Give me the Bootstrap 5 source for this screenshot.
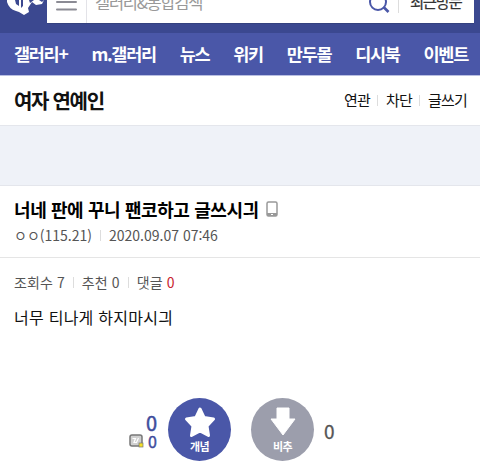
<!DOCTYPE html>
<html lang="ko">
<head>
    <meta charset="utf-8">
    <meta name="viewport" content="width=device-width, initial-scale=1">
    <title>여자 연예인</title>
    <link href="https://cdn.jsdelivr.net/npm/bootstrap@5.3.0/dist/css/bootstrap.min.css" rel="stylesheet">
    <style>
        body { font-family: "Noto Sans CJK KR", sans-serif; color: #111; line-height: 1.5; overflow: hidden; }
        a { color: inherit; text-decoration: none; }
        .top-bar { height: 33px; background: #3b4890; padding-right: 6px; }
        .logo-box { width: 47px; height: 33px; }
        .search-box { height: 24px; background: #fff; border-bottom: 1px solid #34417f; }
        .menu-btn { width: 40px; height: 23px; border-right: 1px solid #e3e3e8; }
        .search-text { font-size: 16.5px; line-height: 24px; letter-spacing: -1.3px; color: #999; padding-left: 8px; margin-top: -10px; }
        .recent { font-size: 15.5px; line-height: 24px; letter-spacing: -1.4px; color: #333; width: 75px; padding-left: 11px; margin-top: -11px; -webkit-text-stroke: .2px; }
        .recent-wrap { border-left: 1px solid #ddd; height: 13px; }
        .gnb { height: 43px; background: #4a57a8; border-bottom: 1px solid #b9bfe2; color: #fff; font-size: 17.5px; letter-spacing: -1.3px; padding: 0 12px 0 14px; }
        .gall-head { height: 49px; padding: 0 13px 0 14px; }
        .gall-name { font-size: 20px; letter-spacing: -1.3px; }
        .gall-links { font-size: 15px; letter-spacing: -.8px; gap: 7.5px; }
        .bar { width: 1px; height: 11px; background: #ddd; }
        .ad-area { height: 61px; background: #eff2f8; border: solid #e4e6ec; border-width: 1px 0; }
        .post-head { height: 72px; padding: 10px 14px 0; border-bottom: 1px solid #e5e5e5; }
        .post-title { font-size: 18px; line-height: 27px; letter-spacing: -.4px; color: #000; }
        .phone-icon { margin-left: 7px; margin-top: -1px; }
        .meta { font-size: 14px; line-height: 21px; color: #555; }
        .meta-date { margin-top: 2px; }
        .post-stats { padding: 14px 14px 0; }
        .stat-list { letter-spacing: .1px; }
        .comment-count { color: #c8232f; }
        .post-body { font-size: 16px; line-height: 24px; letter-spacing: .25px; margin: 12px 0 0; }
        .vote-row { height: 64px; margin-top: 68px; }
        .vote-left { width: 157px; margin-right: 11px; }
        .vote-btn { width: 63px; height: 63px; border-radius: 50%; color: #fff; font-size: 11px; line-height: 16px; letter-spacing: -.5px; padding-top: 9px; }
        .up { background: #4a57a8; }
        .down { background: #9c9eac; margin-left: 20px; margin-right: 10px; }
        .count { font-size: 20px; line-height: 20px; color: #3f4c9c; -webkit-text-stroke: .5px; }
        .count-sub { font-size: 16px; line-height: 16px; color: #3f4c9c; -webkit-text-stroke: .4px; }
        .count-down { font-size: 19px; color: #555; -webkit-text-stroke: .3px; margin-top: 4px; }
    </style>
    <script src="https://cdn.jsdelivr.net/npm/bootstrap@5.3.0/dist/js/bootstrap.bundle.min.js"></script>
</head>
<body>
    <!-- Search -->
    <header class="top-bar d-flex align-items-start">
        <div class="logo-box">
            <svg class="d-block" width="47" height="17" viewBox="0 0 47 17" fill="#fff">
                <path d="M7 0H15L16 4L19 6V0H29L30 3L34 0H39L42 2L44 0L42 4L36 5L32 2L28 8L29 12L24 15L19 12L16 11Q9 9 7 2Z"/>
                <path d="M21 0V8L23 6V0Z" fill="#3b4890"/>
            </svg>
        </div>
        <div class="search-box flex-grow-1 d-flex align-items-start">
            <div class="menu-btn">
                <svg class="d-block" width="40" height="14" stroke="#8b8b94" stroke-width="2" stroke-linecap="round"><path d="M10 2H29M10 9.500H29"/></svg>
            </div>
            <div class="search-text flex-grow-1">갤러리&amp;통합검색</div>
            <svg class="me-2" width="22" height="14" viewBox="0 0 22 14" fill="none" stroke="#4a57a8" stroke-width="2"><circle cx="10" cy="2" r="8"/><path d="M15.500 7L20.500 12" stroke-width="2.600"/></svg>
            <div class="recent-wrap"><div class="recent">최근방문</div></div>
        </div>
    </header>

    <!-- Main menu -->
    <nav class="gnb d-flex align-items-center justify-content-between fw-bold text-nowrap">
        <a href="#">갤러리+</a>
        <a href="#">m.갤러리</a>
        <a href="#">뉴스</a>
        <a href="#">위키</a>
        <a href="#">만두몰</a>
        <a href="#">디시북</a>
        <a href="#">이벤트</a>
    </nav>

    <section class="gall-head d-flex align-items-center justify-content-between">
        <h1 class="gall-name fw-bold mb-0">여자 연예인</h1>
        <div class="gall-links d-flex align-items-center">
            <a href="#">연관</a><span class="bar"></span>
            <a href="#">차단</a><span class="bar"></span>
            <a href="#">글쓰기</a>
        </div>
    </section>

    <div class="ad-area"></div>

    <!-- Post -->
    <article>
        <div class="post-head">
            <div class="d-flex align-items-center">
                <h2 class="post-title fw-bold mb-0">너네 판에 꾸니 팬코하고 글쓰시긔</h2>
                <svg class="phone-icon" width="12" height="16" viewBox="0 0 12 16"><rect x="1" y="1" width="10" height="14" rx="1.500" fill="#fff" stroke="#999" stroke-width="1.500"/><path d="M1 12H11V15H1Z" fill="#999"/><path d="M5 13.500H7" stroke="#fff"/></svg>
            </div>
            <div class="meta meta-date d-flex align-items-center gap-2">
                <span>ㅇㅇ(115.21)</span><span class="bar"></span><span>2020.09.07 07:46</span>
            </div>
        </div>
        <div class="post-stats">
            <div class="meta stat-list d-flex align-items-center gap-2">
                <span>조회수 7</span><span class="bar"></span><span>추천 0</span><span class="bar"></span>
                <span>댓글 <span class="comment-count">0</span></span>
            </div>
            <p class="post-body">너무 티나게 하지마시긔</p>
        </div>

        <!-- Votes -->
        <div class="vote-row d-flex align-items-center">
            <div class="vote-left d-flex flex-column align-items-end pt-1">
                <span class="count">0</span>
                <span class="count-sub d-flex align-items-center gap-1">
                    <svg width="15" height="14" viewBox="0 0 15 14"><rect x="1" y="1" width="12" height="11" rx="2" fill="#d0d0d0" stroke="#777" stroke-width="1.500"/><path d="M3.500 4.500H6.500L5 8.500H7.500L9.500 4" fill="none" stroke="#fff" stroke-width="1.200"/><rect x="10" y="9" width="4" height="4" fill="#f5df28" stroke="#777" stroke-width=".7"/></svg>0
                </span>
            </div>
            <a href="#" class="vote-btn up d-flex flex-column align-items-center fw-bold">
                <svg width="32" height="31" viewBox="0 0 32 31"><path d="M16 2L20 10.500L29.500 12L23 19L24.500 28.500L16 24L7.500 28.500L9 19L2.500 12L12 10.500Z" fill="#fff" stroke="#fff" stroke-width="3" stroke-linejoin="round"/></svg>
                <span>개념</span>
            </a>
            <a href="#" class="vote-btn down d-flex flex-column align-items-center fw-bold">
                <svg width="28" height="31" viewBox="0 0 28 31"><path d="M8 1H20V12H26L14 28L2 12H8Z" fill="#fff" stroke="#fff" stroke-linejoin="round"/></svg>
                <span>비추</span>
            </a>
            <span class="count-down">0</span>
        </div>
    </article>
</body>
</html>
